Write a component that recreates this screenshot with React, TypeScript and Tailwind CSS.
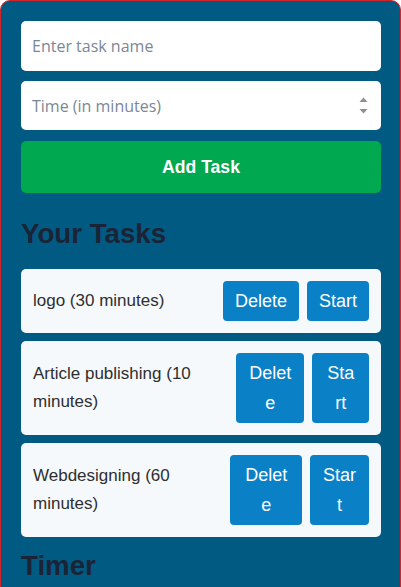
import React, { useState } from "react";

type Task = { name: string; minutes: number };

const App = () => {
  const [tasks] = useState<Task[]>([
    { name: "logo", minutes: 30 },
    { name: "Article publishing", minutes: 10 },
    { name: "Webdesigning", minutes: 60 },
  ]);

  return (
    <div className="min-h-[700px] w-[401px] rounded-[10px] border border-[#d0262b] bg-[#005a82] px-5 pt-5 font-['Liberation_Sans',Arial,sans-serif]">
      <input
        type="text"
        placeholder="Enter task name"
        className="block h-[50px] w-[360px] rounded-[5px] bg-white px-[11px] font-['Open_Sans',sans-serif] text-base text-[#333] outline-none placeholder:text-[#7b8797]"
      />
      <div className="mt-[10px] flex h-[49px] w-[360px] items-center rounded-[5px] bg-white pr-[13px]">
        <input
          type="text"
          placeholder="Time (in minutes)"
          className="h-full min-w-0 flex-1 rounded-[5px] bg-transparent px-[11px] font-['Open_Sans',sans-serif] text-base text-[#333] outline-none placeholder:text-[#7b8797]"
        />
        <svg width="9" height="17" viewBox="0 0 9 17" className="shrink-0">
          <path d="M0.5 5 L4.5 0.5 L8.5 5 Z" fill="#8f8f8f" />
          <path d="M0.5 12 L4.5 16.5 L8.5 12 Z" fill="#8f8f8f" />
        </svg>
      </div>
      <button className="mt-[11px] block h-[52px] w-[360px] rounded-[5px] bg-[#00a84f] text-[17.6px] font-bold text-white">
        Add Task
      </button>

      <h2 className="mt-[25px] mb-[20px] text-[27.7px] leading-[31px] font-bold text-[#1b2436]">
        Your Tasks
      </h2>

      <div className="flex w-[360px] flex-col gap-2">
        {tasks.map((t) => (
          <div
            key={t.name}
            className="flex items-center gap-2 rounded-[5px] bg-[#f6f9fc] p-3"
          >
            <span className="mr-auto text-[17px] leading-7 text-[#2e2e2e]">
              {t.name} ({t.minutes} minutes)
            </span>
            <button className="rounded-[4px] bg-[#0a80c6] px-3 py-[5px] text-[18px] leading-[30px] break-all text-white">
              Delete
            </button>
            <button className="rounded-[4px] bg-[#0a80c6] px-3 py-[5px] text-[18px] leading-[30px] break-all text-white">
              Start
            </button>
          </div>
        ))}
      </div>

      <h2 className="mt-[13px] text-[27.7px] leading-[31px] font-bold text-[#1b2436]">
        Timer
      </h2>
    </div>
  );
};

export default App;
